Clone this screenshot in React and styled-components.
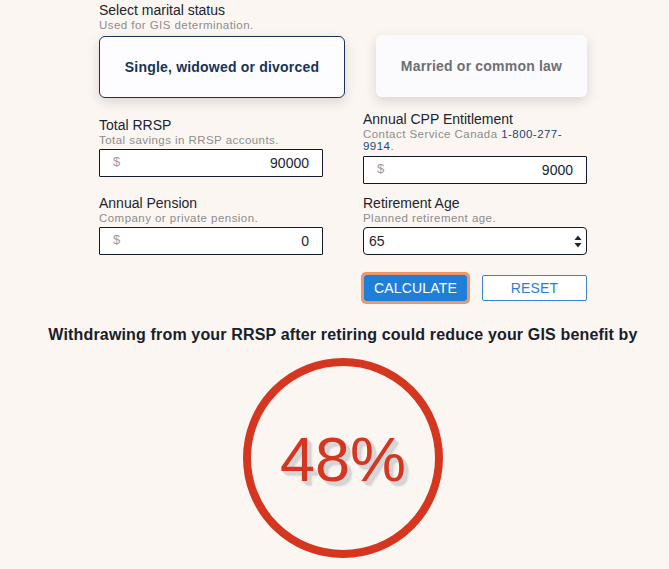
import styled, { createGlobalStyle } from 'styled-components';
import { useState } from 'react';

const GlobalStyle = createGlobalStyle`
  html, body {
    margin: 0;
    padding: 0;
    background-color: #fbf6f2;
    overflow: hidden;
  }
  body {
    font-family: "Liberation Sans", Arial, sans-serif;
    color: #1c2430;
  }
`;

const fields = [
  { label: 'Total RRSP', hint: 'Total savings in RRSP accounts.', value: '90000' },
  { label: 'Annual CPP Entitlement', hint: 'cpp', value: '9000' },
  { label: 'Annual Pension', hint: 'Company or private pension.', value: '0' },
];

const App = () => {
  const [status, setStatus] = useState('single');
  const [age, setAge] = useState('65');

  return (
    <>
      <GlobalStyle />
      <Page>
        <Form>
          <Label>Select marital status</Label>
          <Hint>Used for GIS determination.</Hint>
          <CardRow>
            <StatusCard $selected={status === 'single'} $width={246} onClick={() => setStatus('single')}>
              Single, widowed or divorced
            </StatusCard>
            <StatusCard $selected={status === 'married'} $width={211} onClick={() => setStatus('married')}>
              Married or common law
            </StatusCard>
          </CardRow>

          <FieldGrid>
            {fields.map((f) => (
              <Field key={f.label}>
                <Label>{f.label}</Label>
                {f.hint === 'cpp' ? (
                  <Hint>
                    <HintLine>
                      Contact Service Canada <Phone>1-800-277-</Phone>
                    </HintLine>
                    <HintLine>
                      <Phone>9914</Phone>.
                    </HintLine>
                  </Hint>
                ) : (
                  <Hint>{f.hint}</Hint>
                )}
                <MoneyBox>
                  <Dollar>$</Dollar>
                  <MoneyInput defaultValue={f.value} />
                </MoneyBox>
              </Field>
            ))}
            <Field>
              <Label>Retirement Age</Label>
              <Hint>Planned retirement age.</Hint>
              <SelectWrap>
                <AgeSelect value={age} onChange={(e) => setAge(e.target.value)}>
                  {[60, 61, 62, 63, 64, 65, 66, 67, 68, 69, 70].map((a) => (
                    <option key={a} value={a}>
                      {a}
                    </option>
                  ))}
                </AgeSelect>
                <Arrows width="8" height="13" viewBox="0 0 8 13">
                  <path d="M4 0.5 L7.5 5 L0.5 5 Z" fill="#1c2430" />
                  <path d="M4 12.5 L7.5 8 L0.5 8 Z" fill="#1c2430" />
                </Arrows>
              </SelectWrap>
            </Field>
            <span />
            <ButtonRow>
              <CalcButton>CALCULATE</CalcButton>
              <ResetButton>RESET</ResetButton>
            </ButtonRow>
          </FieldGrid>
        </Form>

        <Heading>Withdrawing from your RRSP after retiring could reduce your GIS benefit by</Heading>
        <Ring>
          <Percent>48%</Percent>
        </Ring>
      </Page>
    </>
  );
};

export default App;

const Page = styled.div`
  display: flex;
  flex-direction: column;
  align-items: center;
  padding: 2px 0 0 17px;
`;

const Form = styled.div`
  width: 488px;
  display: flex;
  flex-direction: column;
`;

const Label = styled.div`
  font-size: 14px;
  line-height: 16px;
  color: #1c2430;
`;

const Hint = styled.div`
  font-size: 11.5px;
  line-height: 12.5px;
  letter-spacing: 0.45px;
  color: #8d8d8d;
  margin: 1px 0 3px;
`;

const HintLine = styled.div`
  white-space: nowrap;
`;

const Phone = styled.span`
  color: #1d4677;
`;

const CardRow = styled.div`
  display: flex;
  justify-content: space-between;
  align-items: center;
  height: 63px;
`;

const StatusCard = styled.div`
  width: ${({ $width }) => $width}px;
  height: 62px;
  box-sizing: border-box;
  display: flex;
  align-items: center;
  justify-content: center;
  border-radius: 6px;
  font-size: 14px;
  font-weight: 700;
  letter-spacing: 0.2px;
  cursor: pointer;
  background-color: ${({ $selected }) => ($selected ? '#fdfdff' : '#fbfbfe')};
  color: ${({ $selected }) => ($selected ? '#173456' : '#6e6f73')};
  border: ${({ $selected }) => ($selected ? '1px solid #173456' : 'none')};
  box-shadow: 0 4px 12px rgba(40, 30, 20, 0.15);
  margin-top: ${({ $selected }) => ($selected ? '1px' : '0')};
`;

const FieldGrid = styled.div`
  display: grid;
  grid-template-columns: 224px 224px;
  justify-content: space-between;
  align-items: center;
  row-gap: 11px;
  margin-top: 13px;
`;

const Field = styled.div`
  display: flex;
  flex-direction: column;
`;

const MoneyBox = styled.div`
  height: 28px;
  box-sizing: border-box;
  border: 1px solid #101a28;
  border-radius: 1px;
  background-color: #ffffff;
  display: flex;
  align-items: center;
  padding: 0 13px 0 13px;
`;

const Dollar = styled.span`
  font-size: 13px;
  color: #9a9a9a;
  margin-top: -3px;
`;

const MoneyInput = styled.input`
  flex: 1;
  min-width: 0;
  border: none;
  outline: none;
  background: transparent;
  text-align: right;
  font-family: "Liberation Sans", Arial, sans-serif;
  font-size: 14px;
  color: #1c2430;
  padding: 0;
`;

const SelectWrap = styled.div`
  position: relative;
  height: 28px;
`;

const AgeSelect = styled.select`
  appearance: none;
  width: 100%;
  height: 28px;
  box-sizing: border-box;
  border: 1px solid #101a28;
  border-radius: 4px;
  background-color: #ffffff;
  padding: 0 0 0 5px;
  font-family: "Liberation Sans", Arial, sans-serif;
  font-size: 14px;
  color: #1c2430;
  outline: none;
`;

const Arrows = styled.svg`
  position: absolute;
  right: 5px;
  top: 8px;
  pointer-events: none;
`;

const ButtonRow = styled.div`
  display: flex;
  gap: 15px;
  margin-top: 9px;
  padding-left: 1px;
`;

const BaseButton = styled.button`
  height: 26px;
  box-sizing: border-box;
  font-family: "Liberation Sans", Arial, sans-serif;
  font-size: 14px;
  letter-spacing: 0.2px;
  border-radius: 2px;
  cursor: pointer;
  padding: 0;
`;

const CalcButton = styled(BaseButton)`
  width: 103px;
  background-color: #1f7fd8;
  color: #ffffff;
  border: none;
  outline: 3px solid #e9976b;
  outline-offset: 0;
`;

const ResetButton = styled(BaseButton)`
  width: 105px;
  background-color: #ffffff;
  color: #2b7dd3;
  border: 1px solid #3584d6;
`;

const Heading = styled.h2`
  margin: 24px 0 0;
  font-size: 16px;
  line-height: 20px;
  font-weight: 700;
  letter-spacing: 0.16px;
  color: #17202c;
  white-space: nowrap;
`;

const Ring = styled.div`
  margin-top: 13px;
  width: 200px;
  height: 200px;
  box-sizing: border-box;
  border: 8px solid #d5361f;
  border-radius: 50%;
  display: flex;
  align-items: center;
  justify-content: center;
`;

const Percent = styled.div`
  font-size: 63px;
  font-weight: 400;
  color: #d5361f;
  margin: 2px 0 0 0;
  text-shadow: 1px 1px 0 #dadada, 2px 2px 0 #d8d8d8, 3px 3px 0 #d5d5d5,
    4px 4px 1px #d3d3d3, 5px 5px 2px #dcdcdc;
`;
